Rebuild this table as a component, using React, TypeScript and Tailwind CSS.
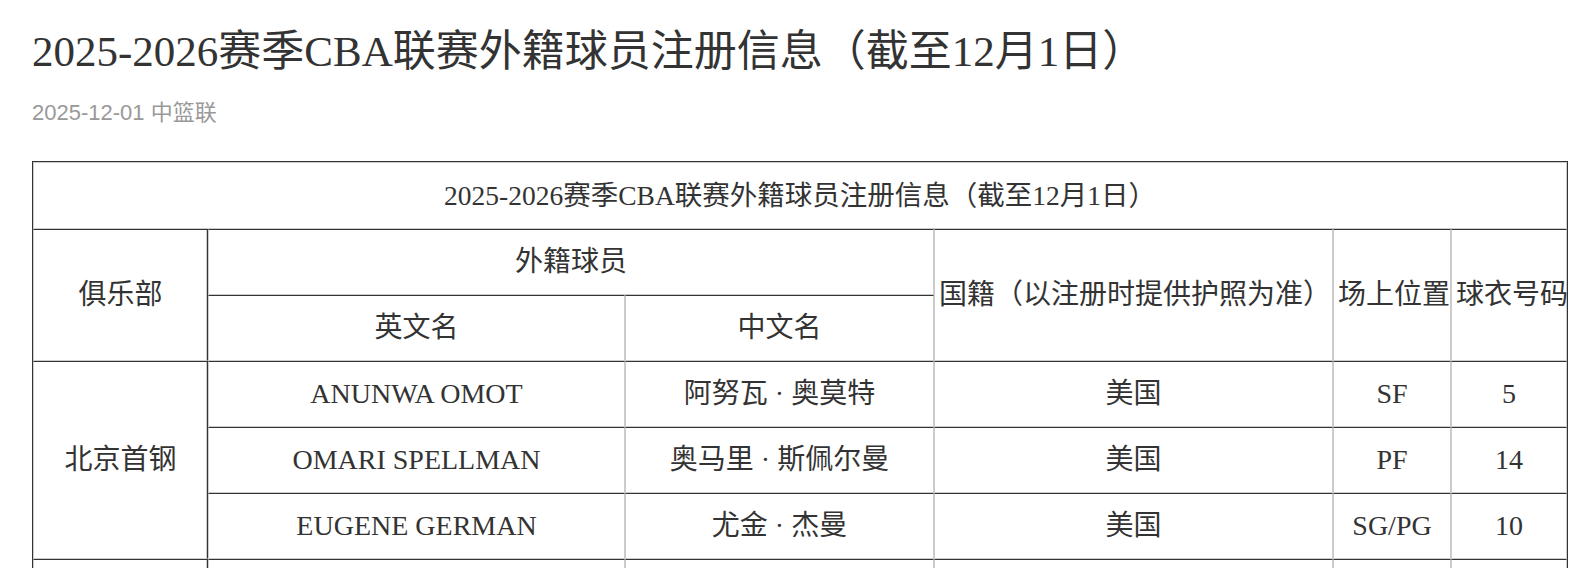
const serif = "font-['Liberation_Serif','Noto_Sans_CJK_SC',serif]";

type Player = { en: string; cn: string; nation: string; pos: string; no: string };

const clubs: { name: string; players: Player[] }[] = [
  {
    name: "北京首钢",
    players: [
      { en: "ANUNWA OMOT", cn: "阿努瓦 · 奥莫特", nation: "美国", pos: "SF", no: "5" },
      { en: "OMARI SPELLMAN", cn: "奥马里 · 斯佩尔曼", nation: "美国", pos: "PF", no: "14" },
      { en: "EUGENE GERMAN", cn: "尤金 · 杰曼", nation: "美国", pos: "SG/PG", no: "10" },
    ],
  },
];

// cell borders: light grey sides/bottom, dark top line
const cell =
  "border-x border-b border-[#ccc] border-t border-t-[#333] text-center align-middle px-1 font-normal";
const clubCell = "border-r-[#333] shadow-[inset_-1px_0_0_#ccc]";

export default function App() {
  return (
    <div className={`min-h-screen bg-white text-[#333] ${serif}`}>
      <div className="pl-[32px] pt-[19px]">
        <h1 className="text-[43px] leading-[66px] font-normal">
          2025-2026赛季CBA联赛外籍球员注册信息（截至12月1日）
        </h1>
        <div className="mt-[12px] text-[22px] leading-[32px] text-[#999] font-['Liberation_Sans','Noto_Sans_CJK_SC',sans-serif]">
          2025-12-01 中篮联
        </div>

        <table className="mt-[32px] w-[1536px] table-fixed border-separate border-spacing-0 border-x border-t border-[#333] text-[28px] leading-[36px]">
          <colgroup>
            <col className="w-[175px]" />
            <col className="w-[417px]" />
            <col className="w-[309px]" />
            <col className="w-[399px]" />
            <col className="w-[118px]" />
            <col className="w-[116px]" />
          </colgroup>
          <thead>
            <tr>
              <th colSpan={6} className={`${cell} border-t-[#ccc] h-[67px] text-[27.5px]`}>
                2025-2026赛季CBA联赛外籍球员注册信息（截至12月1日）
              </th>
            </tr>
            <tr>
              <th rowSpan={2} className={`${cell} ${clubCell}`}>俱乐部</th>
              <th colSpan={2} className={`${cell} h-[66px]`}>外籍球员</th>
              <th rowSpan={2} className={`${cell} whitespace-nowrap px-0`}>国籍（以注册时提供护照为准）</th>
              <th rowSpan={2} className={`${cell} whitespace-nowrap px-0`}>场上位置</th>
              <th rowSpan={2} className={`${cell} whitespace-nowrap px-0`}>球衣号码</th>
            </tr>
            <tr>
              <th className={`${cell} h-[66px]`}>英文名</th>
              <th className={cell}>中文名</th>
            </tr>
          </thead>
          <tbody>
            {clubs.map((club) =>
              club.players.map((p, i) => (
                <tr key={club.name + p.en}>
                  {i === 0 && (
                    <td rowSpan={club.players.length} className={`${cell} ${clubCell}`}>
                      {club.name}
                    </td>
                  )}
                  <td className={`${cell} h-[66px]`}>{p.en}</td>
                  <td className={cell}>{p.cn}</td>
                  <td className={cell}>{p.nation}</td>
                  <td className={cell}>{p.pos}</td>
                  <td className={cell}>{p.no}</td>
                </tr>
              ))
            )}
            <tr>
              <td className={`${cell} ${clubCell} h-[66px]`}></td>
              <td className={cell}></td>
              <td className={cell}></td>
              <td className={cell}></td>
              <td className={cell}></td>
              <td className={cell}></td>
            </tr>
          </tbody>
        </table>
      </div>
    </div>
  );
}
